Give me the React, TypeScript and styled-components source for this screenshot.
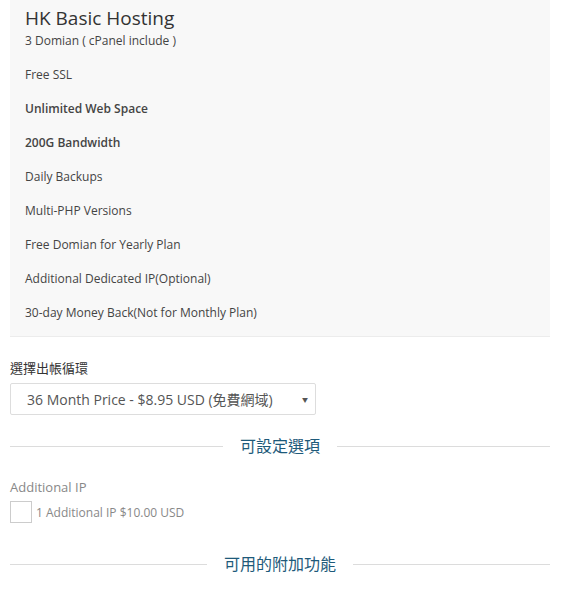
import React from 'react'
import styled, { createGlobalStyle } from 'styled-components'

const GlobalStyle = createGlobalStyle`
  body {
    margin: 0;
    background: #fff;
    font-family: 'Open Sans', 'Noto Sans CJK TC', sans-serif;
    color: #333;
  }
`

const features = [
  { text: 'Free SSL' },
  { text: 'Unlimited Web Space', bold: true },
  { text: '200G Bandwidth', bold: true },
  { text: 'Daily Backups' },
  { text: 'Multi-PHP Versions' },
  { text: 'Free Domian for Yearly Plan' },
  { text: 'Additional Dedicated IP(Optional)' },
  { text: '30-day Money Back(Not for Monthly Plan)' },
]

const App = () => {
  return (
    <Page>
      <GlobalStyle />
      <ProductPanel>
        <Title>HK Basic Hosting</Title>
        <Subtitle>3 Domian ( cPanel include )</Subtitle>
        {features.map((f) => (
          <Feature key={f.text} bold={f.bold}>
            {f.text}
          </Feature>
        ))}
      </ProductPanel>

      <FieldLabel>選擇出帳循環</FieldLabel>
      <SelectBox>
        <span>36 Month Price - $8.95 USD (免費網域)</span>
        <Caret>▼</Caret>
      </SelectBox>

      <Divider top={19}>
        <Line />
        <DividerText>可設定選項</DividerText>
        <Line />
      </Divider>

      <OptionLabel>Additional IP</OptionLabel>
      <CheckRow>
        <CheckBox />
        <CheckText>1 Additional IP $10.00 USD</CheckText>
      </CheckRow>

      <Divider top={29}>
        <Line />
        <DividerText>可用的附加功能</DividerText>
        <Line />
      </Divider>
    </Page>
  )
}

const Page = styled.div`
  width: 540px;
  margin-left: 10px;
`

const ProductPanel = styled.div`
  background: #f8f8f8;
  border-bottom: 1px solid #ececec;
  padding: 6px 15px 13px;
`

const Title = styled.div`
  font-size: 19px;
  line-height: 24px;
  color: #333;
`

const Subtitle = styled.div`
  font-size: 12px;
  line-height: 21px;
  color: #444;
`

const Feature = styled.div<{ bold?: boolean }>`
  font-size: 12px;
  line-height: 20px;
  margin-top: 14px;
  color: ${(props) => (props.bold ? '#444' : '#444')};
  font-weight: ${(props) => (props.bold ? 600 : 400)};
`

const FieldLabel = styled.div`
  margin-top: 21px;
  font-size: 13px;
  line-height: 20px;
  color: #333;
`

const SelectBox = styled.div`
  margin-top: 5px;
  width: 306px;
  height: 32px;
  box-sizing: border-box;
  border: 1px solid #ddd;
  border-radius: 2px;
  padding: 0 7px 0 16px;
  display: flex;
  align-items: center;
  justify-content: space-between;
  font-size: 14px;
  color: #555;
`

const Caret = styled.span`
  font-size: 6px;
  color: #555;
`

const Divider = styled.div<{ top: number }>`
  margin-top: ${(props) => props.top}px;
  display: flex;
  align-items: center;
  height: 24px;
`

const Line = styled.div`
  flex: 1;
  height: 1px;
  background: #dcdcdc;
`

const DividerText = styled.div`
  padding: 0 17px;
  font-size: 16px;
  line-height: 24px;
  color: #1e5a7a;
`

const OptionLabel = styled.div`
  margin-top: 19px;
  font-size: 13px;
  line-height: 20px;
  color: #888;
`

const CheckRow = styled.div`
  margin-top: 4px;
  display: flex;
  align-items: center;
  gap: 4px;
`

const CheckBox = styled.div`
  width: 22px;
  height: 22px;
  box-sizing: border-box;
  border: 1px solid #ccc;
  background: #fff;
`

const CheckText = styled.span`
  font-size: 12px;
  color: #888;
`

export default App
